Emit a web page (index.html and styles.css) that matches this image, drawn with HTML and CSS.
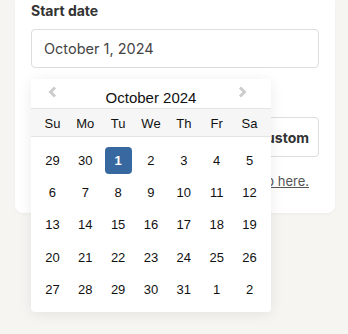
FILE: index.html
```html
<!DOCTYPE html>
<html lang="en">
<head>
<meta charset="utf-8">
<link rel="stylesheet" href="styles.css">
</head>
<body>
<div class="card">
  <div class="label">Start date</div>
  <div class="input">October 1, 2024</div>
  <div class="buttons">
    <button class="btn">Custom</button>
  </div>
  <p class="help"><a href="#">Get help here.</a></p>

  <div class="picker">
    <div class="picker-head">
      <svg class="nav nav-prev" width="9" height="12" viewBox="0 0 9 12"><polyline points="7,1.5 2.5,6 7,10.5" fill="none" stroke="#cccccc" stroke-width="3"/></svg>
      <div class="month-title">October 2024</div>
      <svg class="nav nav-next" width="9" height="12" viewBox="0 0 9 12"><polyline points="2,1.5 6.5,6 2,10.5" fill="none" stroke="#cccccc" stroke-width="3"/></svg>
    </div>
    <div class="weekdays">
      <span>Su</span><span>Mo</span><span>Tu</span><span>We</span><span>Th</span><span>Fr</span><span>Sa</span>
    </div>
    <div class="days">
      <div class="week"><span class="day">29</span><span class="day">30</span><span class="day sel">1</span><span class="day">2</span><span class="day">3</span><span class="day">4</span><span class="day">5</span></div>
      <div class="week"><span class="day">6</span><span class="day">7</span><span class="day">8</span><span class="day">9</span><span class="day">10</span><span class="day">11</span><span class="day">12</span></div>
      <div class="week"><span class="day">13</span><span class="day">14</span><span class="day">15</span><span class="day">16</span><span class="day">17</span><span class="day">18</span><span class="day">19</span></div>
      <div class="week"><span class="day">20</span><span class="day">21</span><span class="day">22</span><span class="day">23</span><span class="day">24</span><span class="day">25</span><span class="day">26</span></div>
      <div class="week"><span class="day">27</span><span class="day">28</span><span class="day">29</span><span class="day">30</span><span class="day">31</span><span class="day">1</span><span class="day">2</span></div>
    </div>
  </div>
</div>
</body>
</html>
```
FILE: styles.css
```css
* { box-sizing: border-box; }
html, body { margin: 0; padding: 0; }
html { background: #f6f5f1; }
body {
  min-height: 334px;
  background: #f6f5f1;
  font-family: Inter, "Liberation Sans", sans-serif;
  padding: 0 13px 0 15px;
}
.card {
  position: relative;
  background: #ffffff;
  border-radius: 0 0 8px 8px;
  box-shadow: 0 1px 3px rgba(0,0,0,0.04);
  padding: 1px 16px 23px;
  width: 320px;
}
.label {
  font-size: 14px;
  line-height: 20px;
  font-weight: 700;
  color: #333333;
}
.input {
  margin-top: 8px;
  height: 39px;
  border: 1px solid #dddddd;
  border-radius: 4px;
  padding: 0 12px;
  display: flex;
  align-items: center;
  font-size: 14.5px;
  color: #444444;
}
.buttons {
  margin-top: 49px;
  display: flex;
  justify-content: flex-end;
  gap: 8px;
}
.btn {
  height: 40px;
  padding: 0 9px 0 14px;
  background: #ffffff;
  border: 1px solid #dddddd;
  border-radius: 4px;
  font-family: Inter, "Liberation Sans", sans-serif;
  font-size: 14px;
  font-weight: 700;
  color: #333333;
}
.help {
  margin: 15px 10px 0 0;
  text-align: right;
  font-size: 13px;
  line-height: 18px;
  color: #555555;
}
.help a { color: #555555; text-decoration: underline; }

.picker {
  position: absolute;
  z-index: 10;
  top: 79px;
  left: 16px;
  width: 240px;
  background: #ffffff;
  border-radius: 4px;
  box-shadow: 0 2px 14px rgba(0,0,0,0.08);
  font-family: "Liberation Sans", Arial, sans-serif;
  color: #111111;
}
.picker-head {
  display: grid;
  grid-template-columns: 1fr auto 1fr;
  align-items: start;
  padding: 10px 0 1px;
  border-bottom: 1px solid #e4e4e4;
}
.nav { margin-top: -3px; display: block; }
.nav-prev { justify-self: start; margin-left: 17px; }
.nav-next { justify-self: end; margin-right: 24px; }
.month-title {
  font-size: 15px;
  line-height: 18px;
  color: #111111;
}
.weekdays {
  display: grid;
  grid-template-columns: repeat(7, 1fr);
  padding: 2px 5px 0;
  height: 28px;
  background: #f6f6f6;
  border-bottom: 1px solid #e4e4e4;
  font-size: 13px;
  line-height: 25px;
  text-align: center;
  color: #111111;
}
.days {
  display: flex;
  flex-direction: column;
  padding: 7px 5px 7px;
  font-size: 13px;
}
.week {
  display: grid;
  grid-template-columns: repeat(7, 1fr);
  height: 32.3px;
  align-items: center;
  justify-items: center;
}
.day {
  display: block;
  width: 27px;
  height: 27px;
  line-height: 27px;
  text-align: center;
  border-radius: 4px;
}
.day.sel {
  background: #3868a0;
  color: #ffffff;
  font-weight: 700;
}
```
